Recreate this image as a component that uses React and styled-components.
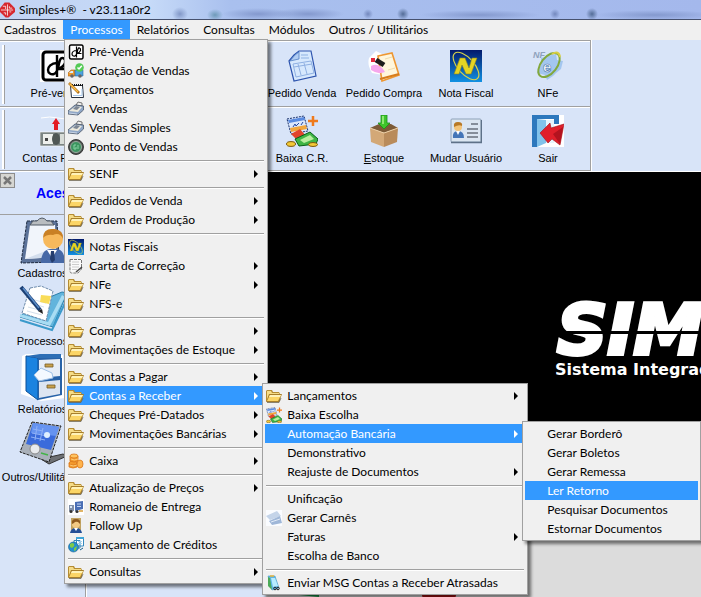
import styled, { createGlobalStyle, css } from "styled-components";

const uiFont = '"Lato", "Open Sans", sans-serif';
const labelFont = '"Liberation Sans", Arial, sans-serif';

const GlobalStyle = createGlobalStyle`
  * {
    box-sizing: border-box;
  }
  body {
    margin: 0;
    overflow: hidden;
    background: #d8e4f8;
    color: #000;
    font-family: ${uiFont};
    font-size: 12px;
  }
  button {
    border: 0;
    margin: 0;
    padding: 0;
    background: none;
    color: inherit;
    font: inherit;
  }
`;

// Window
const Window = styled.div`
  display: flex;
  flex-direction: column;
  height: 100vh;
`;

const TitleBar = styled.header`
  display: flex;
  align-items: center;
  gap: 4px;
  height: 20px;
  flex: none;
  border-bottom: 1px solid #46516e;
  background:
    radial-gradient(ellipse 8px 7px at 180px 14px, #8298c8, transparent),
    radial-gradient(ellipse 8px 6px at 215px 15px, #6e9ab8, transparent),
    radial-gradient(ellipse 36px 6px at 258px 14px, #8499ce, transparent),
    radial-gradient(ellipse 36px 6px at 308px 14px, #8499ce, transparent),
    radial-gradient(ellipse 5px 5px at 368px 14px, #7388bd, transparent),
    radial-gradient(ellipse 6px 6px at 403px 14px, #536c96, transparent),
    radial-gradient(ellipse 60px 5px at 480px 15px, #8499ce, transparent),
    radial-gradient(ellipse 5px 5px at 555px 14px, #7388bd, transparent),
    radial-gradient(ellipse 6px 6px at 592px 14px, #536c96, transparent),
    radial-gradient(ellipse 60px 5px at 655px 15px, #8499ce, transparent),
    linear-gradient(90deg, #c2d3f3 0, #c6daf8 150px, #a9c0ee 230px, #a4b8ec 100%);
`;

const Title = styled.h1`
  margin: 0;
  font-size: 12px;
  font-weight: 400;
  line-height: 18px;
  white-space: pre;
`;

// Menu bar and the menus that drop from it
const MenuBar = styled.nav`
  display: flex;
  align-items: flex-start;
  height: 20px;
  flex: none;
  margin-left: -3px;
  background: #f0f0f0;
`;

const MenuBarEntry = styled.div`
  position: relative;
`;

const MenuBarButton = styled.button`
  display: block;
  height: 19px;
  padding: 0 7px;
  line-height: 19px;
  ${(props) =>
    props.$active &&
    css`
      background: #3399ff;
      color: #fff;
    `}
`;

const Menu = styled.ul`
  position: absolute;
  z-index: 2;
  top: ${(props) => (props.$sub ? "-3px" : "100%")};
  left: ${(props) => (props.$sub ? "calc(100% - 3px)" : "1px")};
  width: ${(props) => props.$width}px;
  margin: 0;
  padding: 2px;
  list-style: none;
  border: 1px solid #a0a0a0;
  background: #f0f0f0;
  color: #000;
  box-shadow: 3px 3px 3px rgba(0, 0, 0, 0.5);
`;

const MenuItem = styled.li`
  position: relative;
`;

const MenuButton = styled.button`
  display: flex;
  align-items: center;
  gap: 5px;
  width: 100%;
  height: 19px;
  padding: 0 7px 0 1px;
  line-height: 19px;
  text-align: left;
  white-space: nowrap;
  ${(props) =>
    props.$active &&
    css`
      background: #3399ff;
      color: #fff;
    `}
`;

const MenuIcon = styled.span`
  flex: none;
  width: 16px;
  height: 16px;
  svg {
    display: block;
    width: 16px;
    height: 16px;
  }
`;

const MenuText = styled.span`
  flex: 1;
`;

const Arrow = styled.span`
  border: solid transparent;
  border-width: 4px 0 4px 4px;
  border-left-color: currentColor;
`;

const Separator = styled.li`
  margin: 4px 1px 2px;
  border-top: 1px solid #a0a0a0;
  border-bottom: 1px solid #fff;
`;

// Toolbars
const ToolArea = styled.div`
  display: flex;
  flex: none;
  height: 132px;
  border-bottom: 1px solid #fff;
`;

const Toolbars = styled.div`
  display: flex;
  flex-direction: column;
  width: 591px;
  border: solid #a0a0a0;
  border-width: 1px 1px 1px 0;
  box-shadow: 1px 0 #fff;
`;

const Toolbar = styled.div`
  display: grid;
  grid-template-columns: repeat(7, 82px);
  height: 65px;
  padding-left: 15px;
  background: linear-gradient(#a0a0a0, #a0a0a0) 4px 3px / 1px 59px no-repeat,
    linear-gradient(#fff, #fff) 2px 3px / 2px 59px no-repeat;
  border-top: 1px solid #fff;
  & + & {
    height: 64px;
    border-top: 1px solid #a0a0a0;
    box-shadow: inset 0 1px #fff;
  }
`;

const ToolButton = styled.button`
  grid-column: ${(props) => props.$column};
  display: flex;
  flex-direction: column;
  align-items: center;
  gap: 4px;
  padding-top: 8px;
  font-family: ${labelFont};
  font-size: 11px;
  line-height: 15px;
  white-space: nowrap;
  svg {
    width: 32px;
    height: 32px;
  }
`;

// Side panel
const Body = styled.div`
  display: flex;
  flex: 1;
  min-height: 0;
`;

const SidePanel = styled.aside`
  width: 86px;
  flex: none;
  border-right: 1px solid #a0a0a0;
`;

const SideHeader = styled.div`
  display: flex;
  height: 43px;
  border-bottom: 1px solid #a0a0a0;
`;

const CloseButton = styled.button`
  width: 15px;
  height: 15px;
  margin-top: 1px;
  border: 1px solid #8c8c8c;
  background: #d6d6d2;
  svg {
    display: block;
    width: 13px;
    height: 13px;
  }
`;

const SideTitle = styled.h2`
  margin: 12px 0 0 21px;
  color: #0000ff;
  font-family: "Liberation Sans", sans-serif;
  font-size: 14px;
  line-height: 18px;
`;

const SideButton = styled.button`
  display: flex;
  flex-direction: column;
  align-items: center;
  gap: 1px;
  width: 85px;
  height: 68px;
  padding-top: 2px;
  font-family: ${labelFont};
  font-size: 11px;
  line-height: 15px;
  white-space: nowrap;
  svg {
    width: 48px;
    height: 48px;
    flex: none;
  }
`;

const Blank = styled.div`
  width: 180px;
  flex: none;
  border-left: 1px solid #fff;
`;

const Stage = styled.main`
  display: flex;
  flex-direction: column;
  flex: 1;
  overflow: hidden;
`;

const Splash = styled.div`
  flex: 1;
  padding: 127px 0 0 289px;
  background: #000;
  color: #fff;
  font-family: "DejaVu Sans", sans-serif;
  font-weight: 700;
  white-space: nowrap;
`;

const Brand = styled.div`
  position: relative;
  padding-left: 2px;
  font-size: 70px;
  font-style: italic;
  line-height: 62px;
  -webkit-text-stroke: 4px #fff;
  &::after {
    content: "";
    position: absolute;
    top: 32px;
    left: 0;
    right: 0;
    height: 3px;
    background: #000;
  }
`;

const Tagline = styled.div`
  font-size: 16px;
  line-height: 18px;
`;

const Partners = styled.footer`
  display: flex;
  gap: 92px;
  height: 64px;
  flex: none;
  padding: 54px 0 0 33px;
  background: #dcdcdc;
`;

// Icons
const FolderIcon = () => (
  <svg viewBox="0 0 16 16">
    <path d="M0 13V3L1 2H6L7 4H13L14 6V13Z" fill="#b58c33" />
    <path d="M1 12V3H5L6 5H13V7Z" fill="#f6dc86" />
    <path d="M0 14L3 6H16L13 14Z" fill="#a87f2b" />
    <path d="M1 13L4 7H15L12 13Z" fill="#fbd566" />
    <path d="M3 9L4 7H15L14 9Z" fill="#fff2b8" />
    <path d="M1 14.500H13L15 10" stroke="#6f6650" strokeWidth=".8" fill="none" />
  </svg>
);

const PreSaleIcon = () => (
  <svg viewBox="0 0 32 32" fill="none" stroke="#000">
    <rect width="32" height="32" fill="#fff" stroke="none" />
    <rect x="3" y="2" width="27" height="28" rx="3" strokeWidth="3" />
    <path d="M17 5V27M17 13C11 13 8 17 8 20S11 25 14 24C19 22 18 15 20 10C21 7 26 7 25 13C24 16 22 18 17 19H27" strokeWidth="2.400" />
  </svg>
);

const TruckCheckIcon = () => (
  <svg viewBox="0 0 16 16">
    <path d="M0 10L3 7H7V13H0Z" fill="#ef9b2e" stroke="#a6631a" strokeWidth=".6" />
    <path d="M7 7H15V13H7Z" fill="#4ba3e0" stroke="#2b6aa0" strokeWidth=".6" />
    <path d="M1 10L3 8H5V10Z" fill="#d5efff" />
    <circle cx="4" cy="13" r="1.800" fill="#666" />
    <circle cx="12" cy="13" r="1.800" fill="#666" />
    <circle cx="11.500" cy="4.500" r="4.300" fill="#54ca55" />
    <path d="M9.500 4.500L11 6L13.800 2.800" fill="none" stroke="#fff" strokeWidth="1.500" />
  </svg>
);

const NotepadIcon = () => (
  <svg viewBox="0 0 16 16">
    <path d="M2.500 3.500H14.500L15.500 15.500H3.500Z" fill="#fff" stroke="#26303f" />
    <path d="M4 3H15" stroke="#111" strokeDasharray="1 1" strokeWidth="2" />
    <path d="M5 13.500H14V7" fill="none" stroke="#a8c9ec" />
    <path d="M1 1L11 11" stroke="#a96c1b" strokeWidth="2.600" />
    <path d="M1.500 1.500L10 10" stroke="#ffc14a" strokeWidth="1.400" />
  </svg>
);

const RegisterIcon = () => (
  <svg viewBox="0 0 16 16">
    <path d="M8 4L10 1L14 2V5Z" fill="#eee" stroke="#555" strokeWidth=".8" />
    <path d="M0 10L7 4L15.500 5V9L10 14L0 13Z" fill="#8fa6c6" stroke="#4d5868" strokeWidth=".8" />
    <path d="M1 10L8 5L14 6L10 11Z" fill="#ece9dc" />
    <path d="M5 8L8 5L12 6L9 9Z" fill="#7c8694" />
    <path d="M1 12L9 13" stroke="#c7d3e4" />
  </svg>
);

const PointIcon = () => (
  <svg viewBox="0 0 16 16">
    <circle cx="8" cy="8" r="7.500" fill="#4e5450" stroke="#222" strokeWidth=".8" />
    <circle cx="8" cy="8" r="5.500" fill="#3c9560" stroke="#9aa79f" />
    <path d="M6 6H8M6 6V10H8V8M10 6V10" stroke="#87d4a4" fill="none" />
  </svg>
);

const InvoiceIcon = () => (
  <svg viewBox="0 0 32 32">
    <defs>
      <linearGradient id="invoiceBlue" x1="0" x2="0" y1="0" y2="1">
        <stop offset="0" stopColor="#03196b" />
        <stop offset="1" stopColor="#1191e3" />
      </linearGradient>
    </defs>
    <rect width="32" height="32" fill="url(#invoiceBlue)" />
    <ellipse cx="16" cy="16" rx="17" ry="8" transform="rotate(48 16 16)" fill="none" stroke="#d8d24a" strokeWidth="1.200" />
    <path d="M4 24L10 8H15L19 18L22 8H27L21 24H16L12 15L9 24Z" fill="#e5d423" stroke="#8d8420" strokeWidth=".6" />
  </svg>
);

const LetterIcon = () => (
  <svg viewBox="0 0 16 16">
    <path d="M2 1.500H13.500V11L10 15H3.500Q2 15 2 13Z" fill="#fafafa" stroke="#777" strokeDasharray="3 1" />
    <path d="M4 4H11M4 6.500H11M4 9H11M4 11.500H9" stroke="#ccc" />
    <path d="M8 14L14 9" stroke="#444" strokeWidth="1.500" />
  </svg>
);

const CoinsIcon = () => (
  <svg viewBox="0 0 16 16" fill="#f39a2d" stroke="#d9771a" strokeWidth=".8">
    <path d="M1 10V14Q5 16 9 14V10Z" />
    <ellipse cx="5" cy="10" rx="4" ry="2" />
    <path d="M2 3V8Q6 10 10 8V3Z" />
    <ellipse cx="6" cy="3" rx="4" ry="2" fill="#ffc35e" />
    <path d="M3 6Q6 8 10 6M2 12Q5 14 9 12" fill="none" stroke="#ffd588" />
    <ellipse cx="12" cy="11" rx="3" ry="4" fill="#ffb34c" />
  </svg>
);

const TruckIcon = () => (
  <svg viewBox="0 0 16 16">
    <rect width="16" height="16" fill="#fff" />
    <path d="M7 3L15 2V10L7 12Z" fill="#4a6fb5" />
    <path d="M9 5H13M9 7.500H13" stroke="#c5d6f3" />
    <path d="M1 6H6V12H1Z" fill="#8291aa" />
    <path d="M2 7H4V9H2Z" fill="#d9e8f6" />
    <circle cx="3" cy="12.500" r="1.600" fill="#333" />
    <circle cx="9" cy="12.500" r="1.600" fill="#333" />
    <path d="M11 12H15" stroke="#d69b35" strokeWidth="1.500" />
  </svg>
);

const PersonIcon = () => (
  <svg viewBox="0 0 16 16">
    <rect x="3" width="10" height="12" fill="#c2a361" />
    <path d="M2 15Q3 10 8 10T14 15Z" fill="#234e96" />
    <circle cx="8" cy="6" r="4" fill="#f2c983" />
    <path d="M4 6Q3 1 8 1T12 6L10 4Q7 3 6 5Z" fill="#8e591e" />
    <path d="M6 10L8 13L10 10Z" fill="#fff" />
  </svg>
);

const GlobeIcon = () => (
  <svg viewBox="0 0 16 16">
    <path d="M6 3.500H12V11H6ZM8.500 .5H15.500V9H8.500Z" fill="#fff" stroke="#3689bd" />
    <path d="M8 1H16" stroke="#3fa4d8" strokeWidth="2" />
    <path d="M10 4.500H14M10 6.500H14" stroke="#a5d3ec" />
    <circle cx="5.500" cy="10" r="5" fill="#238fcf" stroke="#17608f" strokeWidth=".6" />
    <path d="M2 7Q5 5 6 7T4 11L2 10ZM6 11L9 9L8 13L6 14Z" fill="#7ecb48" />
    <path d="M12 13L15 11" stroke="#17608f" />
  </svg>
);

const PaymentIcon = () => (
  <svg viewBox="0 0 32 32">
    <path d="M1 4L18 1L22 16L5 19Z" fill="#dbe7fb" stroke="#172f6c" strokeDasharray="2 1" />
    <path d="M2 5L18 2L19 5L3 8Z" fill="#5a8be0" />
    <path d="M4 13L20 10L21 14L5 17Z" fill="#f1a63c" />
    <path d="M7 12L9 9L10 11L13 8M15 10L17 7" stroke="#2549a2" fill="none" />
    <path d="M5 19L14 14L20 21L10 24Z" fill="#e2452b" />
    <path d="M9 24L24 17L32 24L30 29L13 31Z" fill="#3fb545" stroke="#075f18" />
    <path d="M14 25L24 20L28 24L18 28Z" fill="#b9ee9f" />
    <ellipse cx="5" cy="29" rx="4.500" ry="2.400" fill="#f4c936" stroke="#7b5b11" />
    <ellipse cx="27" cy="29.500" rx="4.500" ry="2" fill="#f4c936" stroke="#7b5b11" />
    <path d="M27 1V11M22 6H32" stroke="#ef7a1c" strokeWidth="2.500" />
  </svg>
);

const BookletIcon = () => (
  <svg viewBox="0 0 16 16">
    <rect width="16" height="16" fill="#fafcff" />
    <path d="M0 6L11 1L15 6L4 10Z" fill="#c4d4e9" />
    <path d="M3 11L14 6L16 13L6 15Z" fill="#9fb7d8" />
    <path d="M5 12L14 9" stroke="#e2ecf8" />
  </svg>
);

const PhoneIcon = () => (
  <svg viewBox="0 0 16 16">
    <path d="M2 1H9L13 13L6 15Z" fill="#5fb6e7" stroke="#4f9fc4" strokeWidth=".6" />
    <path d="M2 2V11L6 15L4 3Z" fill="#4baa58" />
    <path d="M5 3H9L12 11L7 12Z" fill="#b7ecff" />
    <path d="M4 1H8" stroke="#eab43b" strokeWidth="1.500" />
    <circle cx="9" cy="13.500" r="1.300" fill="none" stroke="#222" />
    <circle cx="12" cy="13.500" r="1.300" fill="none" stroke="#222" />
  </svg>
);

const SalesOrderIcon = () => (
  <svg viewBox="0 0 32 32">
    <path d="M8 5L13 1H25L30 26L8 31L3 11Z" fill="#d6e8fd" />
    <path d="M3 11L8 5L13 1H25L30 26L8 31Z" fill="none" stroke="#2c53ad" strokeWidth="1.200" />
    <path d="M9 5L13 2L13 9L4 11Z" fill="#b1cdf3" stroke="#527fc4" strokeWidth=".8" />
    <path d="M15 5H22M15 8H23" stroke="#8fb2e3" />
    <path d="M7 14L25 11L28 23L10 27ZM8 17L26 14M12 14L15 25M18 13L21 24" fill="none" stroke="#8fb0e2" />
  </svg>
);

const PurchaseOrderIcon = () => (
  <svg viewBox="0 0 32 32">
    <path d="M1 8L8 1L14 4L20 26L4 23Q-1 15 1 8Z" fill="#fff" />
    <path d="M10 6L24 3L31 25L14 31Z" fill="#fff6dc" stroke="#ee9732" strokeWidth="1.600" />
    <path d="M12 29L31 24" stroke="#d77d1d" strokeWidth="2" />
    <path d="M3 16Q11 12 17 22Q10 25 3 20Z" fill="#f6a7ec" />
    <path d="M8 10L16 15" stroke="#1c1c1c" strokeWidth="5" />
    <path d="M3 10L7 10" stroke="#e3293b" strokeWidth="4" />
    <path d="M17 9L24 7M20 20L27 18" stroke="#efdcae" />
  </svg>
);

const NfeIcon = () => (
  <svg viewBox="0 0 32 32">
    <path d="M9 8L16 6L24 4L25 10L31 11L29 19L24 23L21 26L15 30L13 25L5 23L9 15Z" fill="#a3c6ef" />
    <ellipse cx="17" cy="15" rx="14" ry="8" transform="rotate(-52 17 15)" fill="none" stroke="#82a83c" strokeWidth="2" />
    <path d="M20 4Q27 0 28 7" fill="none" stroke="#d9cf45" strokeWidth="2" />
    <text x="1" y="8" fill="#8fa2bd" fontFamily="Liberation Sans" fontSize="9" fontStyle="italic" fontWeight="700">NF</text>
    <text x="11" y="22" fill="#fff" stroke="#4b76ac" strokeWidth=".6" fontFamily="Liberation Sans" fontSize="15" fontWeight="700">e</text>
  </svg>
);

const BoxIcon = () => (
  <svg viewBox="0 0 32 32">
    <path d="M2 13L11 9H23L30 13L16 18Z" fill="#7c5a37" />
    <path d="M2 13L16 18V32L3 27Z" fill="#d3a877" />
    <path d="M30 13L16 18V32L29 27Z" fill="#b98b5b" />
    <path d="M2 13L16 18L30 13" fill="none" stroke="#edcfa5" />
    <path d="M13 0H19V8H22L16 14L10 8H13Z" fill="#3ec52b" stroke="#1b8f18" strokeWidth=".8" />
    <path d="M15 1V9" stroke="#a9f389" strokeWidth="1.500" />
  </svg>
);

const IdCardIcon = () => (
  <svg viewBox="0 0 32 32">
    <rect x="1" y="4" width="30" height="23" rx="1" fill="#dbe6f1" stroke="#8fa2b8" />
    <path d="M1 27.500H31.500V5" fill="none" stroke="#5e7188" strokeWidth="1.500" />
    <path d="M3 23Q2 16 8 16T14 23Z" fill="#4476b7" />
    <circle cx="8" cy="12" r="4" fill="#f3c478" />
    <path d="M4 12Q3 7 8 7T12 11Q9 9 4 12Z" fill="#b87925" />
    <path d="M6 16L8 20L10 16Z" fill="#fff" />
    <path d="M21 9H28M17 14H28M17 18H28M17 22H28" stroke="#69727c" strokeWidth="1.500" />
  </svg>
);

const ExitIcon = () => (
  <svg viewBox="0 0 32 32">
    <rect width="32" height="32" fill="#fff" />
    <path d="M0 0H27V9H22V4H5V32H0Z" fill="#2d78bd" />
    <path d="M5 4L14 5V28L5 32Z" fill="#82c2ea" />
    <path d="M14 5H22V28H14Z" fill="#e6f4fd" />
    <path d="M8 18L18 8L19 13L32 9L28 30L20 24L16 28Z" fill="#e01f2b" stroke="#9e1019" strokeWidth=".6" />
    <path d="M21 19L31 12L28 29Z" fill="#b3131f" />
  </svg>
);

const BillsIcon = () => (
  <svg viewBox="0 0 32 32">
    <path d="M1 3Q10 1 18 3T32 3" fill="none" stroke="#fff" />
    <path d="M16 3L20 9H18V15H14V9H12Z" fill="#e31b23" />
    <rect y="17" width="32" height="14" fill="#7b8482" stroke="#fff" strokeWidth=".6" />
    <path d="M3 19H13V29H3Z" fill="#eef0ed" />
    <path d="M20 19H30V29H20Z" fill="#d9ddd9" />
    <rect x="5" y="23" width="3" height="3" fill="#444" />
    <ellipse cx="16" cy="24" rx="4" ry="6" fill="#4f5755" />
  </svg>
);

const LogoIcon = () => (
  <svg viewBox="0 0 16 16" width="15" height="18">
    <path d="M5 0H10L16 6V10L9 16H6L0 10V6Z" fill="#d7282f" />
    <path d="M1 8H14M8 2V14M3 4H6V7M10 4V6H13M4 11H6V13M10 10H12" stroke="#fff" strokeWidth=".8" fill="none" />
  </svg>
);

const CrossIcon = () => (
  <svg viewBox="0 0 13 13">
    <path d="M3 3L10 10M10 3L3 10" stroke="#777" strokeWidth="2.500" />
  </svg>
);

const ClipboardIcon = () => (
  <svg viewBox="0 0 48 48">
    <path d="M8 4H38L40 45L2 46Z" fill="#5b7299" stroke="#1d2a40" strokeDasharray="3 1" />
    <path d="M11 8H36L37 40L6 42Z" fill="#f1f5fb" />
    <path d="M6 42L37 40V30Z" fill="#d3deed" />
    <path d="M11 8L14 4H18Q23 -2 28 4H32L35 8Z" fill="#b9bdc0" stroke="#515a66" />
    <path d="M22 46Q22 33 31 32H39Q46 34 46 46Z" fill="#4769a6" />
    <path d="M28 33L33 41L38 33Z" fill="#fff" />
    <path d="M32 34H35L36 43L33 46L31 42Z" fill="#243d6e" />
    <circle cx="34" cy="22" r="10" fill="#f7b95c" />
    <path d="M24 21Q24 11 35 12Q45 13 44 22Q41 15 34 18Q28 17 24 21Z" fill="#c98025" />
  </svg>
);

const PapersIcon = () => (
  <svg viewBox="0 0 48 48">
    <path d="M1 32L34 42L48 8L43 7L12 20Z" fill="#62b4dc" stroke="#2b7faa" />
    <path d="M1 35L33 45L46 18" fill="none" stroke="#3b9acb" strokeWidth="2" />
    <path d="M1 29L29 37L43 10L46 12L31 41L1 32Z" fill="#a8dcf3" />
    <path d="M11 3L22 1L34 6L27 36L3 28Z" fill="#fff" stroke="#6e8bab" strokeDasharray="3 1" />
    <path d="M12 14L27 18M11 18L25 22M9 22L24 26M8 26L23 30" stroke="#d3dfec" />
    <path d="M22 10L32 11L30 19L21 17Z" fill="#f9dc58" />
    <path d="M2 2L21 25" stroke="#1b3f75" strokeWidth="4" />
    <path d="M4 3L20 23" stroke="#5a8cc8" strokeWidth="1.500" />
    <path d="M19 26L23 24L24 29Z" fill="#222" />
  </svg>
);

const CabinetIcon = () => (
  <svg viewBox="0 0 48 48">
    <path d="M3 3L7 1L44 2L46 45L22 48L2 41Z" fill="#fff" />
    <path d="M7 3L19 5V47L7 38Z" fill="#1b83e0" stroke="#0c4f97" />
    <path d="M7 3L21 1H42V5H19Z" fill="#2c6eb6" />
    <path d="M19 5H43V42L19 47Z" fill="#2762a8" />
    <path d="M20 7L41 6V23L20 25Z" fill="#e6edf7" />
    <path d="M20 29L41 27V41L20 45Z" fill="#dde5f1" />
    <path d="M15 22L22 15L33 20L34 25L20 28Z" fill="#f4f9ff" stroke="#9ec0e5" />
    <path d="M26 11H34V14H26ZM28 32H36V35H28Z" fill="#caa24d" stroke="#735b27" strokeWidth=".8" />
  </svg>
);

const TabletIcon = () => (
  <svg viewBox="0 0 48 48">
    <path d="M22 38L44 33L48 35L30 43Z" fill="#6d7074" stroke="#333" />
    <path d="M13 1L42 5L30 41L1 31Z" fill="#a9b0b9" stroke="#222" strokeDasharray="3 1" />
    <path d="M14 2L40 6L32 29L7 23Z" fill="#3a6bdb" />
    <path d="M14 2L40 6L37 15L12 12Z" fill="#6593f0" />
    <path d="M14 8L24 10M13 12L28 15M12 16L26 19M18 5L16 19M24 7L21 20" stroke="#8fb1f7" />
    <circle cx="28" cy="14" r="3" fill="#dff0ff" />
    <circle cx="16" cy="28" r="5" fill="#e8eaed" stroke="#888" />
    <path d="M22 32L29 34" stroke="#43b348" strokeWidth="1.500" />
  </svg>
);

const GreenMark = () => (
  <svg width="31" height="12" viewBox="0 0 31 12">
    <path d="M0 8L6 0L14 6L20 1V10ZM24 0L31 3V8Z" fill="#169c46" />
  </svg>
);

const RedMark = () => (
  <svg width="34" height="12" viewBox="0 0 34 12">
    <ellipse cx="17" cy="8" rx="17" ry="8" fill="#a81414" />
  </svg>
);

// Menu data, null draws a separator
const bankMenu = [
  { text: "Gerar Borderô" },
  { text: "Gerar Boletos" },
  { text: "Gerar Remessa" },
  { text: "Ler Retorno", active: true },
  { text: "Pesquisar Documentos" },
  { text: "Estornar Documentos" },
];

const receivableMenu = [
  { text: "Lançamentos", Icon: FolderIcon, arrow: true },
  { text: "Baixa Escolha", Icon: PaymentIcon },
  { text: "Automação Bancária", arrow: true, active: true, items: bankMenu, width: 179 },
  { text: "Demonstrativo" },
  { text: "Reajuste de Documentos", arrow: true },
  null,
  { text: "Unificação" },
  { text: "Gerar Carnês", Icon: BookletIcon },
  { text: "Faturas", arrow: true },
  { text: "Escolha de Banco" },
  null,
  { text: "Enviar MSG Contas a Receber Atrasadas", Icon: PhoneIcon },
];

const processMenu = [
  { text: "Pré-Venda", Icon: PreSaleIcon },
  { text: "Cotação de Vendas", Icon: TruckCheckIcon },
  { text: "Orçamentos", Icon: NotepadIcon },
  { text: "Vendas", Icon: RegisterIcon },
  { text: "Vendas Simples", Icon: RegisterIcon },
  { text: "Ponto de Vendas", Icon: PointIcon },
  null,
  { text: "SENF", Icon: FolderIcon, arrow: true },
  null,
  { text: "Pedidos de Venda", Icon: FolderIcon, arrow: true },
  { text: "Ordem de Produção", Icon: FolderIcon, arrow: true },
  null,
  { text: "Notas Fiscais", Icon: InvoiceIcon },
  { text: "Carta de Correção", Icon: LetterIcon, arrow: true },
  { text: "NFe", Icon: FolderIcon, arrow: true },
  { text: "NFS-e", Icon: FolderIcon },
  null,
  { text: "Compras", Icon: FolderIcon, arrow: true },
  { text: "Movimentações de Estoque", Icon: FolderIcon, arrow: true },
  null,
  { text: "Contas a Pagar", Icon: FolderIcon, arrow: true },
  { text: "Contas a Receber", Icon: FolderIcon, arrow: true, active: true, items: receivableMenu, width: 266 },
  { text: "Cheques Pré-Datados", Icon: FolderIcon, arrow: true },
  { text: "Movimentações Bancárias", Icon: FolderIcon, arrow: true },
  null,
  { text: "Caixa", Icon: CoinsIcon, arrow: true },
  null,
  { text: "Atualização de Preços", Icon: FolderIcon, arrow: true },
  { text: "Romaneio de Entrega", Icon: TruckIcon },
  { text: "Follow Up", Icon: PersonIcon },
  { text: "Lançamento de Créditos", Icon: GlobeIcon },
  null,
  { text: "Consultas", Icon: FolderIcon, arrow: true },
];

const menuBar = [
  { text: "Cadastros" },
  { text: "Processos", items: processMenu },
  { text: "Relatórios" },
  { text: "Consultas" },
  { text: "Módulos" },
  { text: "Outros / Utilitários" },
];

const toolbars = [
  [
    { text: "Pré-venda", Icon: PreSaleIcon, column: 1 },
    { text: "Pedido Venda", Icon: SalesOrderIcon, column: 4 },
    { text: "Pedido Compra", Icon: PurchaseOrderIcon, column: 5 },
    { text: "Nota Fiscal", Icon: InvoiceIcon, column: 6 },
    { text: "NFe", Icon: NfeIcon, column: 7 },
  ],
  [
    { text: "Contas Pagar", Icon: BillsIcon, column: 1 },
    { text: "Baixa C.R.", Icon: PaymentIcon, column: 4 },
    { text: <><u>E</u>stoque</>, Icon: BoxIcon, column: 5 },
    { text: "Mudar Usuário", Icon: IdCardIcon, column: 6 },
    { text: "Sair", Icon: ExitIcon, column: 7 },
  ],
];

const shortcuts = [
  { text: "Cadastros", Icon: ClipboardIcon },
  { text: "Processos", Icon: PapersIcon },
  { text: "Relatórios", Icon: CabinetIcon },
  { text: "Outros/Utilitários", Icon: TabletIcon },
];

const MenuList = ({ items, width, sub }) => (
  <Menu $width={width} $sub={sub}>
    {items.map((el, i) => {
      if (!el) return <Separator key={"separator-" + i} role="separator" />;
      return (
        <MenuItem key={el.text}>
          <MenuButton $active={el.active}>
            <MenuIcon>{el.Icon && <el.Icon />}</MenuIcon>
            <MenuText>{el.text}</MenuText>
            {el.arrow && <Arrow />}
          </MenuButton>
          {el.items && <MenuList items={el.items} width={el.width} sub />}
        </MenuItem>
      );
    })}
  </Menu>
);

const App = () => {
  return (
    <Window>
      <GlobalStyle />
      <TitleBar>
        <LogoIcon />
        <Title>{"Simples+®  - v23.11a0r2"}</Title>
      </TitleBar>
      <MenuBar>
        {menuBar.map((el) => (
          <MenuBarEntry key={el.text}>
            <MenuBarButton $active={Boolean(el.items)}>{el.text}</MenuBarButton>
            {el.items && <MenuList items={el.items} width={204} />}
          </MenuBarEntry>
        ))}
      </MenuBar>
      <ToolArea>
        <Toolbars>
          {toolbars.map((tools, i) => (
            <Toolbar key={"toolbar-" + i}>
              {tools.map((el) => (
                <ToolButton key={el.column} $column={el.column}>
                  <el.Icon />
                  <span>{el.text}</span>
                </ToolButton>
              ))}
            </Toolbar>
          ))}
        </Toolbars>
      </ToolArea>
      <Body>
        <SidePanel>
          <SideHeader>
            <CloseButton aria-label="Fechar">
              <CrossIcon />
            </CloseButton>
            <SideTitle>Acesso</SideTitle>
          </SideHeader>
          {shortcuts.map((el) => (
            <SideButton key={el.text}>
              <el.Icon />
              <span>{el.text}</span>
            </SideButton>
          ))}
        </SidePanel>
        <Blank />
        <Stage>
          <Splash>
            <Brand>SIMPLES</Brand>
            <Tagline>Sistema Integrado</Tagline>
          </Splash>
          <Partners>
            <GreenMark />
            <RedMark />
          </Partners>
        </Stage>
      </Body>
    </Window>
  );
};

export default App;
